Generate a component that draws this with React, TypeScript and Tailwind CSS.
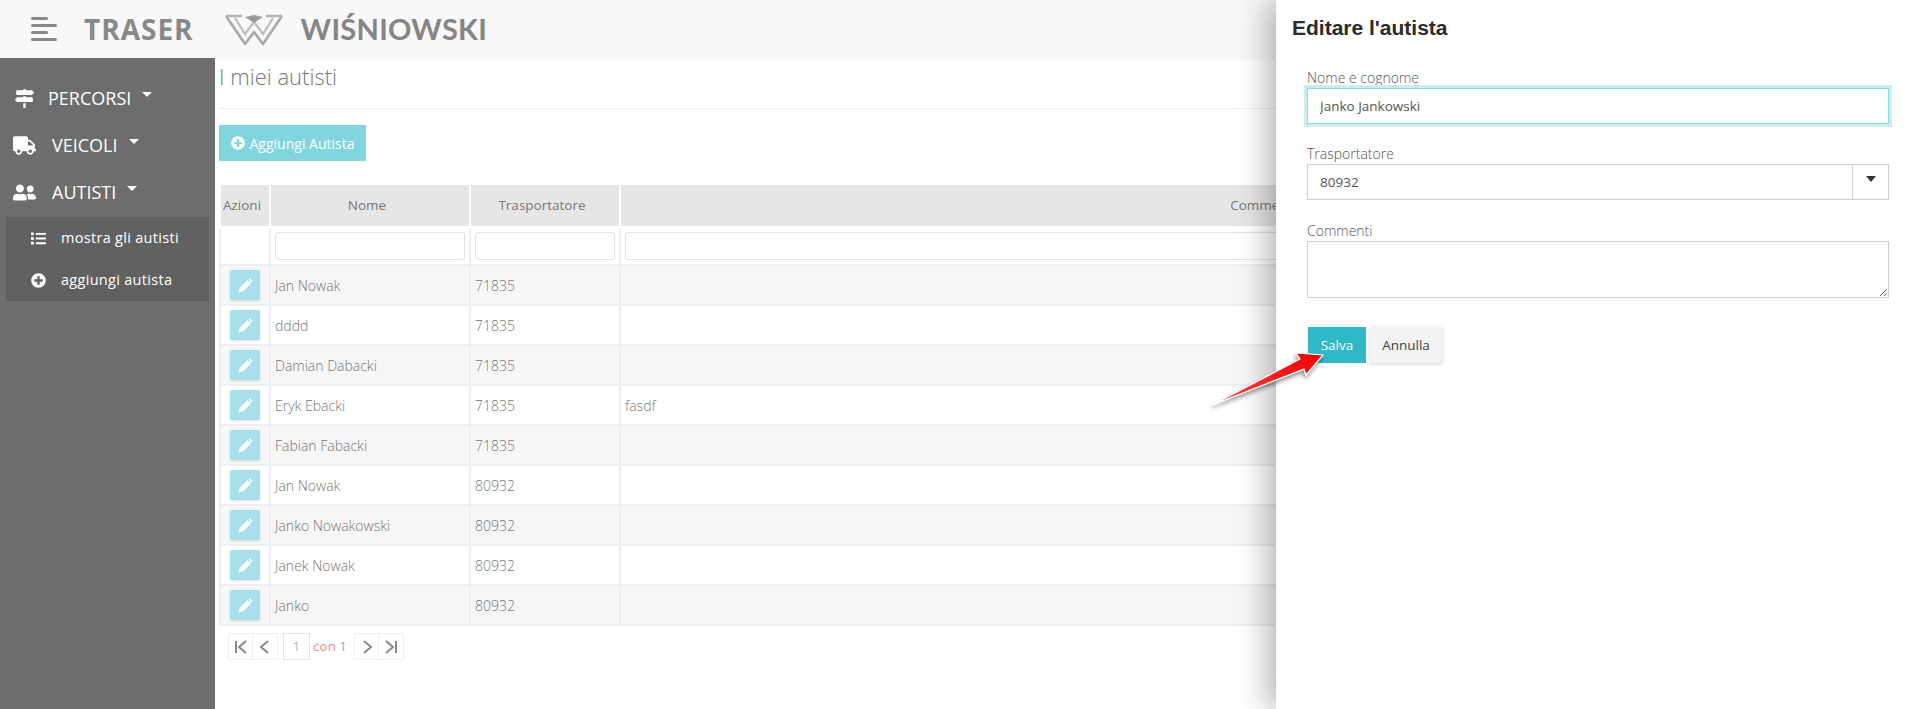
import { FaList, FaMapSigns, FaPlusCircle, FaTruck, FaUserFriends } from "react-icons/fa";

const font = "font-['Open_Sans',sans-serif]";

const drivers = [
  { name: "Jan Nowak", carrier: "71835", note: "" },
  { name: "dddd", carrier: "71835", note: "" },
  { name: "Damian Dabacki", carrier: "71835", note: "" },
  { name: "Eryk Ebacki", carrier: "71835", note: "fasdf" },
  { name: "Fabian Fabacki", carrier: "71835", note: "" },
  { name: "Jan Nowak", carrier: "80932", note: "" },
  { name: "Janko Nowakowski", carrier: "80932", note: "" },
  { name: "Janek Nowak", carrier: "80932", note: "" },
  { name: "Janko", carrier: "80932", note: "" },
];

function Logo() {
  return (
    <svg width="58" height="32" viewBox="0 0 58 32" className="ml-[31px] mt-[1px]">
      <path d="M1 2 L20 30 L29 18 L38 30 L57 2" fill="none" stroke="#a8a8a8" strokeWidth="2.6" strokeLinejoin="round" />
      <path d="M1 2 L17 2 M41 2 L57 2" fill="none" stroke="#b5b5b5" strokeWidth="2.4" />
      <path d="M10 4 L20 20 L29 8 L38 20 L48 4" fill="none" stroke="#bdbdbd" strokeWidth="2.2" />
      <path d="M20 3 L29 1 L38 3 L29 9 Z" fill="#9b9b9b" />
    </svg>
  );
}

function Header() {
  return (
    <header className="flex h-[58px] items-center bg-[#f8f8f8]">
      <div className="ml-[31px] flex w-[27px] flex-col gap-[4px]">
        <span className="h-[3px] w-[17px] rounded-sm bg-[#888]" />
        <span className="h-[3px] w-[26px] rounded-sm bg-[#888]" />
        <span className="h-[3px] w-[17px] rounded-sm bg-[#888]" />
        <span className="h-[3px] w-[26px] rounded-sm bg-[#888]" />
      </div>
      <span className="ml-[26px] font-['Open_Sans',sans-serif] text-[28px] font-bold tracking-[1px] text-[#888]">TRASER</span>
      <Logo />
      <span className="ml-[18px] font-['Lato',sans-serif] text-[29px] font-bold tracking-[0.3px] text-[#858585]">WIŚNIOWSKI</span>
    </header>
  );
}

function Sidebar() {
  const items = [
    { label: "PERCORSI", icon: <FaMapSigns size={19} />, gap: "ml-[12px]" },
    { label: "VEICOLI", icon: <FaTruck size={23} />, gap: "ml-[16px]" },
    { label: "AUTISTI", icon: <FaUserFriends size={23} />, gap: "ml-[16px]" },
  ];
  return (
    <aside className={`${font} w-[215px] shrink-0 bg-[#6d6d6d] pt-[17px] text-white`}>
      {items.map((item) => (
        <div key={item.label} className="flex h-[47px] items-center pl-[13px]">
          <span className="flex w-[23px] justify-center">{item.icon}</span>
          <span className={`${item.gap} text-[18px]`}>{item.label}</span>
          <span className="mb-[8px] ml-[11px] h-0 w-0 border-x-[5px] border-t-[5px] border-x-transparent border-t-white" />
        </div>
      ))}
      <div className="mx-[6px] mt-[1px] bg-[#616161] text-[14.5px] tracking-[0.3px]">
        <div className="flex h-[42px] items-center pl-[25px]">
          <FaList size={15} />
          <span className="ml-[15px]">mostra gli autisti</span>
        </div>
        <div className="flex h-[42px] items-center pl-[25px]">
          <FaPlusCircle size={15} />
          <span className="ml-[15px]">aggiungi autista</span>
        </div>
      </div>
    </aside>
  );
}

function PencilIcon() {
  return (
    <svg width="15" height="15" viewBox="0 0 15 15" fill="#fff">
      <path d="M0.5 14.5 L1.5 10 L9.5 2 L13 5.5 L5 13.5 Z" />
      <path d="M10.4 1.1 Q11.5 0.2 12.6 1 L14 2.4 Q14.8 3.5 13.9 4.6 Z" />
    </svg>
  );
}

function DriversTable() {
  return (
    <table className="w-[1694px] table-fixed border-collapse text-[14px] text-[#777]">
      <colgroup>
        <col className="w-[50px]" />
        <col className="w-[200px]" />
        <col className="w-[150px]" />
        <col />
      </colgroup>
      <thead>
        <tr className="h-[42px] bg-[#e6e6e6]">
          {["Azioni", "Nome", "Trasportatore", "Commenti"].map((h) => (
            <th key={h} className="border-x-2 border-b-2 border-x-white border-b-white p-0 pr-[6px] text-center text-[13.5px] font-medium">
              {h}
            </th>
          ))}
        </tr>
        <tr className="h-[38px] bg-white">
          <td className="border-2 border-t-0 border-[#ebeef2]" />
          {[0, 1, 2].map((i) => (
            <td key={i} className="border-2 border-t-0 border-[#ebeef2] px-[4px]">
              <input className="block h-[28px] w-full rounded-[3px] border border-[#dfe2e8] bg-white" />
            </td>
          ))}
        </tr>
      </thead>
      <tbody>
        {drivers.map((d, i) => (
          <tr key={i} className={`h-[40px] ${i % 2 === 0 ? "bg-[#f6f6f6]" : "bg-white"}`}>
            <td className="border-2 border-[#ebeef2] p-0">
              <button type="button" className="mx-auto flex h-[30px] w-[30px] items-center justify-center rounded-[2px] bg-[#a7e0e8] shadow-sm">
                <PencilIcon />
              </button>
            </td>
            <td className="border-2 border-[#ebeef2] px-[4px] font-light">{d.name}</td>
            <td className="border-2 border-[#ebeef2] px-[4px] font-light">{d.carrier}</td>
            <td className="border-2 border-[#ebeef2] px-[4px] font-light">{d.note}</td>
          </tr>
        ))}
      </tbody>
    </table>
  );
}

function PageIcon({ d }: { d: string }) {
  return (
    <svg width="16" height="16" viewBox="0 0 16 16" fill="none" stroke="#888" strokeWidth="2">
      <path d={d} />
    </svg>
  );
}

function Pagination() {
  const btn = "flex h-[27px] w-[25px] items-center justify-center border border-[#eceef2]";
  return (
    <div className="ml-[9px] mt-[7px] flex h-[27px] items-center text-[13px]">
      <span className={`${btn} rounded-l-[2px]`}>
        <PageIcon d="M3 2 V14 M13 2 L6 8 L13 14" />
      </span>
      <span className={`${btn} -ml-px w-[26px] rounded-r-[2px]`}>
        <PageIcon d="M11 2 L4 8 L11 14" />
      </span>
      <span className="ml-[5px] flex h-[27px] w-[27px] items-center justify-center border border-[#e0e3e8] font-light text-[#888]">1</span>
      <span className="ml-[3px] w-[41px] tracking-[0.3px] text-[#ff7f8a]">con 1</span>
      <span className={`${btn} rounded-l-[2px]`}>
        <PageIcon d="M5 2 L12 8 L5 14" />
      </span>
      <span className={`${btn} -ml-px w-[26px] rounded-r-[2px]`}>
        <PageIcon d="M13 2 V14 M3 2 L10 8 L3 14" />
      </span>
    </div>
  );
}

function EditPanel() {
  const label = "mb-[1px] block text-[14px] font-light leading-[18px] text-[#555]";
  return (
    <div className={`${font} absolute bottom-0 right-0 top-0 w-[644px] bg-white shadow-[-8px_0_30px_rgba(0,0,0,0.3)]`}>
      <h2 className="ml-[16px] mt-[16px] font-['Liberation_Sans',sans-serif] text-[21px] font-bold leading-[24px] text-[#2b2b2b]">
        Editare l'autista
      </h2>
      <form className="ml-[31px] mt-[29px] w-[582px]">
        <label className={label}>Nome e cognome</label>
        <input
          readOnly
          value="Janko Jankowski"
          className="h-[36px] w-full border border-[#85dfe6] px-[12px] text-[13.5px] text-[#555] outline-[3px] outline-[#c9edf0]"
        />
        <label className={`${label} mt-[21px]`}>Trasportatore</label>
        <div className="flex h-[36px] border border-[#cccdd5]">
          <span className="flex flex-1 items-center px-[12px] text-[13.5px] text-[#555]">80932</span>
          <span className="flex w-[36px] justify-center border-l border-[#cccdd5] pt-[11px]">
            <span className="h-0 w-0 border-x-[5px] border-t-[6px] border-x-transparent border-t-[#333]" />
          </span>
        </div>
        <label className={`${label} mt-[22px]`}>Commenti</label>
        <textarea className="block h-[57px] w-full border border-[#cccdd5]" />
        <div className="ml-[1px] mt-[29px] flex gap-[4px]">
          <button type="button" className="h-[36px] w-[58px] bg-[#2fb9c6] text-[13.5px] text-white">
            Salva
          </button>
          <button type="button" className="h-[36px] w-[72px] bg-[#f3f3f3] text-[13.5px] text-[#444] shadow-[0_1px_4px_rgba(0,0,0,0.2)]">
            Annulla
          </button>
        </div>
      </form>
    </div>
  );
}

function Arrow() {
  return (
    <svg className="absolute left-[1200px] top-[340px]" width="140" height="80" viewBox="1200 340 140 80">
      <defs>
        <linearGradient id="arrowRed" x1="0" y1="1" x2="1" y2="0">
          <stop offset="0" stopColor="#ff4444" />
          <stop offset="1" stopColor="#f00000" />
        </linearGradient>
        <filter id="arrowShadow" x="-20%" y="-20%" width="140%" height="150%">
          <feDropShadow dx="-1" dy="3" stdDeviation="2" floodColor="#000" floodOpacity="0.45" />
        </filter>
      </defs>
      <polygon
        points="1323,355 1296,353 1300,359 1212,405 1304,369 1306,375"
        fill="url(#arrowRed)"
        stroke="#fff"
        strokeWidth="1.2"
        filter="url(#arrowShadow)"
      />
    </svg>
  );
}

export default function App() {
  return (
    <div className={`${font} relative h-[709px] w-full overflow-hidden bg-white`}>
      <Header />
      <div className="flex h-[651px]">
        <Sidebar />
        <main className="flex-1 border-t-2 border-[#fafafa] pl-[4px]">
          <div className="mt-[3px] border-b border-[#eee] pb-[19px]">
            <h1 className="text-[22px] font-light leading-[26px] text-[#777]">I miei autisti</h1>
          </div>
          <button type="button" className="mt-[16px] flex h-[36px] w-[147px] items-center justify-center gap-[5px] bg-[#80d5de] text-[14px] text-white">
            <FaPlusCircle size={14} />
            Aggiungi Autista
          </button>
          <div className="mt-[24px]">
            <DriversTable />
            <Pagination />
          </div>
        </main>
      </div>
      <EditPanel />
      <Arrow />
    </div>
  );
}
